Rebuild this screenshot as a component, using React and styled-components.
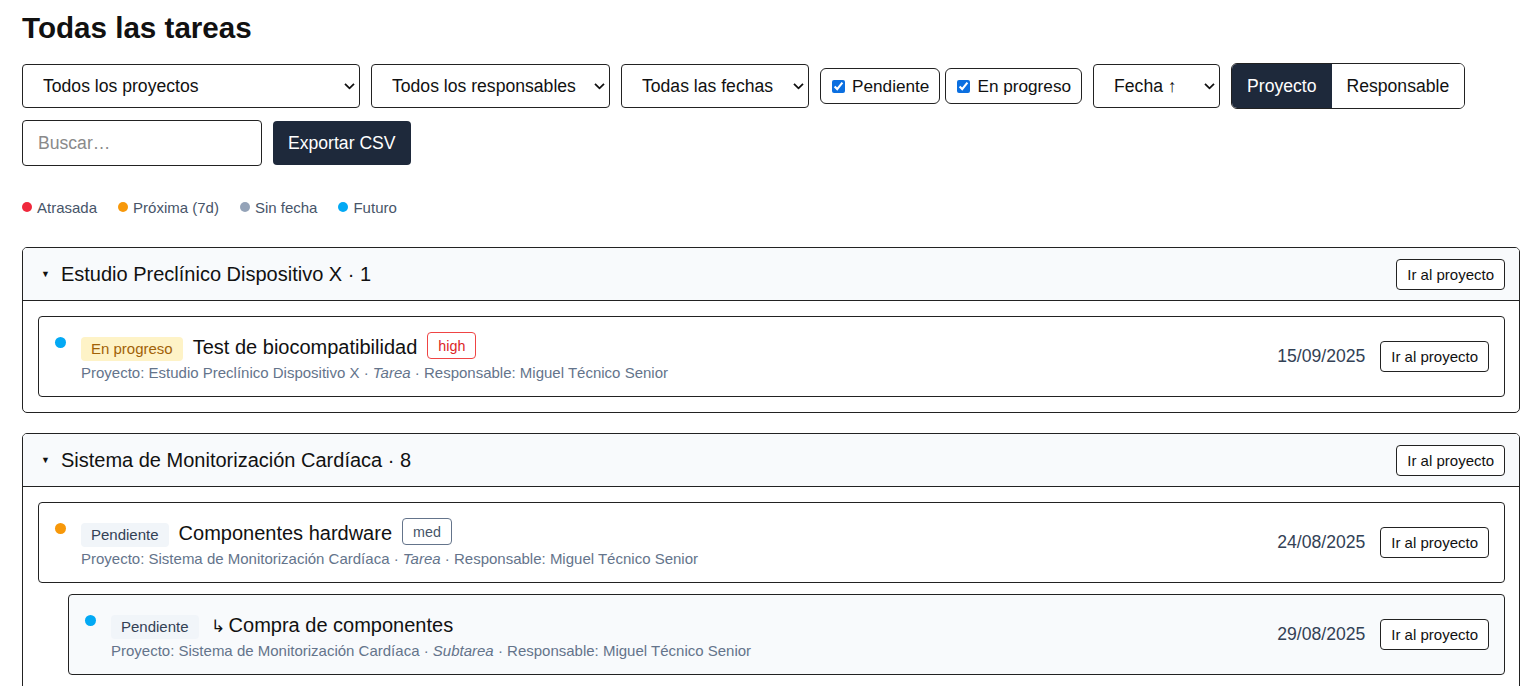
import React from 'react'
import styled, { createGlobalStyle } from 'styled-components'

const GlobalStyle = createGlobalStyle`
  body {
    margin: 0;
    background: #fff;
    font-family: "Liberation Sans", Arial, sans-serif;
    color: #111;
  }
  * { box-sizing: border-box; }
`

const legend = [
  { label: 'Atrasada', color: '#f0283c' },
  { label: 'Próxima (7d)', color: '#f7980a' },
  { label: 'Sin fecha', color: '#94a3b8' },
  { label: 'Futuro', color: '#03a9f4' },
]

const groups = [
  {
    name: 'Estudio Preclínico Dispositivo X',
    count: 1,
    tasks: [
      {
        dot: '#03a9f4',
        status: 'En progreso',
        title: 'Test de biocompatibilidad',
        priority: 'high',
        project: 'Estudio Preclínico Dispositivo X',
        kind: 'Tarea',
        owner: 'Miguel Técnico Senior',
        date: '15/09/2025',
      },
    ],
  },
  {
    name: 'Sistema de Monitorización Cardíaca',
    count: 8,
    tasks: [
      {
        dot: '#f7980a',
        status: 'Pendiente',
        title: 'Componentes hardware',
        priority: 'med',
        project: 'Sistema de Monitorización Cardíaca',
        kind: 'Tarea',
        owner: 'Miguel Técnico Senior',
        date: '24/08/2025',
      },
      {
        dot: '#03a9f4',
        status: 'Pendiente',
        title: 'Compra de componentes',
        sub: true,
        project: 'Sistema de Monitorización Cardíaca',
        kind: 'Subtarea',
        owner: 'Miguel Técnico Senior',
        date: '29/08/2025',
      },
    ],
  },
]

function Chevron() {
  return (
    <svg width="11" height="7" viewBox="0 0 11 7">
      <path d="M1 1l4.5 4.5L10 1" fill="none" stroke="#111" strokeWidth="1.8" />
    </svg>
  )
}

function Dropdown({ width, children }) {
  return (
    <SelectWrap $w={width}>
      <Select>{children}</Select>
      <ChevronBox><Chevron /></ChevronBox>
    </SelectWrap>
  )
}

export default function App() {
  return (
    <Page>
      <GlobalStyle />
      <Title>Todas las tareas</Title>

      <Toolbar>
        <Dropdown width={338}><option>Todos los proyectos</option></Dropdown>
        <Dropdown width={239}><option>Todos los responsables</option></Dropdown>
        <Dropdown width={188}><option>Todas las fechas</option></Dropdown>
        <CheckGroup>
          <CheckLabel><input type="checkbox" defaultChecked />Pendiente</CheckLabel>
          <CheckLabel><input type="checkbox" defaultChecked />En progreso</CheckLabel>
        </CheckGroup>
        <Dropdown width={127}><option>Fecha ↑</option></Dropdown>
        <Segmented>
          <SegButton $active>Proyecto</SegButton>
          <SegButton>Responsable</SegButton>
        </Segmented>
        <Search placeholder="Buscar…" />
        <DarkButton>Exportar CSV</DarkButton>
      </Toolbar>

      <Legend>
        {legend.map((l) => (
          <LegendItem key={l.label}>
            <Dot $color={l.color} />
            {l.label}
          </LegendItem>
        ))}
      </Legend>

      <Groups>
        {groups.map((g) => (
          <Group key={g.name}>
            <GroupHeader>
              <GroupTitle>
                <Caret>▼</Caret>
                {g.name} · {g.count}
              </GroupTitle>
              <SmallButton>Ir al proyecto</SmallButton>
            </GroupHeader>
            <GroupBody>
              {g.tasks.map((t) => (
                <TaskCard key={t.title} $sub={t.sub}>
                  <TaskDot $color={t.dot} />
                  <TaskMain>
                    <TitleRow>
                      <StatusBadge $progress={t.status === 'En progreso'}>{t.status}</StatusBadge>
                      <TaskTitle>
                        {t.sub && <SubArrow>↳</SubArrow>}
                        {t.title}
                      </TaskTitle>
                      {t.priority && <Priority $high={t.priority === 'high'}>{t.priority}</Priority>}
                    </TitleRow>
                    <Meta>
                      Proyecto: {t.project} · <em>{t.kind}</em> · Responsable: {t.owner}
                    </Meta>
                  </TaskMain>
                  <DateText>{t.date}</DateText>
                  <SmallButton>Ir al proyecto</SmallButton>
                </TaskCard>
              ))}
            </GroupBody>
          </Group>
        ))}
      </Groups>
    </Page>
  )
}

const Page = styled.div`
  padding: 0 2px 20px 22px;
`

const Title = styled.h1`
  margin: 10px 0 17px;
  font-size: 29.6px;
  line-height: 36px;
  font-weight: 700;
  color: #111;
`

const Toolbar = styled.div`
  display: flex;
  flex-wrap: wrap;
  align-items: center;
  gap: 11px 11px;
  max-width: 1460px;
`

const SelectWrap = styled.div`
  position: relative;
  width: ${(p) => p.$w}px;
  height: 44px;
`

const Select = styled.select`
  appearance: none;
  width: 100%;
  height: 100%;
  border: 1px solid #222;
  border-radius: 4px;
  background: #fff;
  padding: 0 30px 0 20px;
  font-family: inherit;
  font-size: 17.6px;
  color: #111;
`

const ChevronBox = styled.span`
  position: absolute;
  right: 5px;
  top: 50%;
  transform: translateY(-45%);
  display: flex;
  pointer-events: none;
`

const CheckGroup = styled.div`
  display: flex;
  gap: 5px;
`

const CheckLabel = styled.label`
  display: flex;
  align-items: center;
  gap: 7px;
  height: 36px;
  padding: 0 10px 0 11px;
  border: 1px solid #222;
  border-radius: 6px;
  font-size: 17.2px;
  color: #111;
  input {
    margin: 0;
    width: 13px;
    height: 13px;
    accent-color: #0b6fe0;
  }
`

const Segmented = styled.div`
  display: flex;
  height: 46px;
  border: 1px solid #222;
  border-radius: 6px;
  overflow: hidden;
`

const SegButton = styled.button`
  border: none;
  padding: 0 15px;
  font-family: inherit;
  font-size: 17.6px;
  background: ${(p) => (p.$active ? '#1e293b' : '#fff')};
  color: ${(p) => (p.$active ? '#fff' : '#111')};
`

const Search = styled.input`
  width: 240px;
  height: 46px;
  border: 1px solid #222;
  border-radius: 4px;
  padding: 0 15px;
  font-family: inherit;
  font-size: 17.6px;
  &::placeholder { color: #8a8a8a; }
`

const DarkButton = styled.button`
  height: 44px;
  padding: 0 15px;
  border: none;
  border-radius: 4px;
  background: #1e293b;
  color: #fff;
  font-family: inherit;
  font-size: 17.6px;
`

const Legend = styled.div`
  display: flex;
  gap: 21px;
  margin: 32px 0 0;
  height: 18px;
`

const LegendItem = styled.span`
  display: flex;
  align-items: center;
  gap: 5px;
  font-size: 15px;
  color: #475569;
`

const Dot = styled.span`
  width: 10px;
  height: 10px;
  border-radius: 50%;
  background: ${(p) => p.$color};
`

const Groups = styled.div`
  display: flex;
  flex-direction: column;
  gap: 20px;
  margin-top: 31px;
`

const Group = styled.section`
  border: 1px solid #222;
  border-radius: 5px;
  overflow: hidden;
`

const GroupHeader = styled.div`
  display: flex;
  align-items: center;
  justify-content: space-between;
  height: 53px;
  padding: 0 14px 0 18px;
  background: #f8fafc;
  border-bottom: 1px solid #222;
`

const GroupTitle = styled.div`
  display: flex;
  align-items: center;
  font-size: 20px;
  color: #111;
`

const Caret = styled.span`
  font-size: 9px;
  margin-right: 11px;
`

const SmallButton = styled.button`
  height: 31px;
  padding: 0 10px;
  border: 1px solid #222;
  border-radius: 4px;
  background: #fff;
  color: #111;
  font-family: inherit;
  font-size: 15px;
  white-space: nowrap;
`

const GroupBody = styled.div`
  display: flex;
  flex-direction: column;
  gap: 11px;
  padding: 15px 14px 15px 15px;
`

const TaskCard = styled.div`
  display: flex;
  align-items: center;
  gap: 15px;
  min-height: 81px;
  margin-left: ${(p) => (p.$sub ? '30px' : '0')};
  padding: 0 15px 0 16px;
  border: 1px solid #222;
  border-radius: 4px;
  background: ${(p) => (p.$sub ? '#f8fafc' : '#fff')};
`

const TaskDot = styled.span`
  align-self: flex-start;
  flex: none;
  width: 11px;
  height: 11px;
  margin-top: 20px;
  border-radius: 50%;
  background: ${(p) => p.$color};
`

const TaskMain = styled.div`
  flex: 1;
  display: flex;
  flex-direction: column;
  gap: 3px;
  padding-top: 2px;
`

const TitleRow = styled.div`
  display: flex;
  align-items: center;
  gap: 10px;
  height: 27px;
`

const StatusBadge = styled.span`
  display: inline-flex;
  align-items: center;
  height: 24px;
  margin-top: 3px;
  padding: 0 10px;
  border-radius: 4px;
  font-size: 15px;
  background: ${(p) => (p.$progress ? '#fef3c7' : '#f1f5f9')};
  color: ${(p) => (p.$progress ? '#a16207' : '#334155')};
`

const TaskTitle = styled.span`
  font-size: 20px;
  color: #111;
`

const SubArrow = styled.span`
  display: inline-block;
  margin: 0 4px 0 2px;
  font-size: 17px;
`

const Priority = styled.span`
  display: inline-flex;
  align-items: center;
  height: 27px;
  padding: 0 10px;
  border-radius: 4px;
  font-size: 14.3px;
  border: 1px solid ${(p) => (p.$high ? '#ef4444' : '#64748b')};
  color: ${(p) => (p.$high ? '#dc2626' : '#475569')};
  margin-top: -3px;
`

const Meta = styled.div`
  font-size: 15px;
  line-height: 18px;
  color: #64748b;
`

const DateText = styled.span`
  font-size: 17.6px;
  color: #334155;
`
